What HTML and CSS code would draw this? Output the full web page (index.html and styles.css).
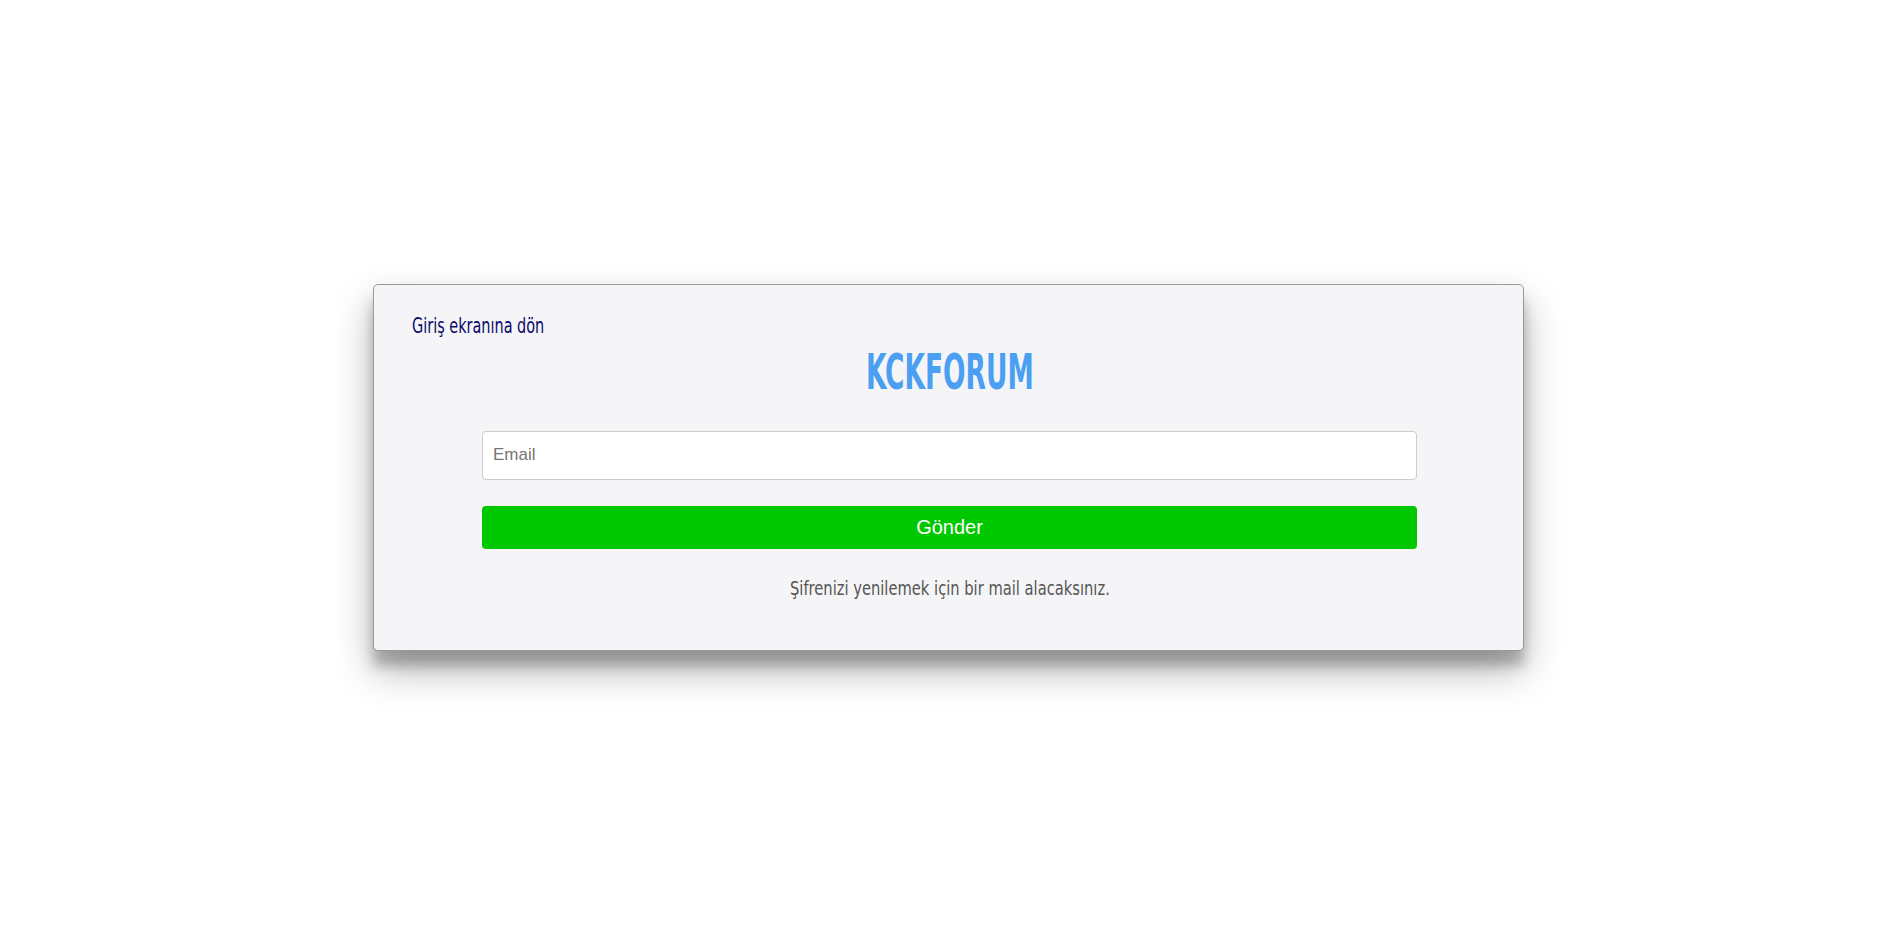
FILE: index.html
```html
<!DOCTYPE html>
<html lang="tr">
<head>
<meta charset="utf-8">
<title>KCKFORUM - Şifremi unuttum</title>
<link rel="stylesheet" href="styles.css">
</head>
<body>
<div class="page">
  <div class="card">
    <div class="back-row"><a class="back" href="#">Giriş ekranına dön</a></div>
    <h1 class="logo"><span class="logo-text">KCKFORUM</span></h1>
    <form class="form">
      <input class="email" type="email" placeholder="Email">
      <button class="submit" type="button">Gönder</button>
    </form>
    <p class="note"><span class="note-text">Şifrenizi yenilemek için bir mail alacaksınız.</span></p>
  </div>
</div>
</body>
</html>
```

FILE: styles.css
```css
html, body {
  margin: 0;
  padding: 0;
  background: #ffffff;
}

.page {
  min-height: 936px;
  display: flex;
  align-items: center;
  justify-content: center;
  padding-right: 5px;
  padding-bottom: 2px;
  box-sizing: border-box;
}

.card {
  width: 1151px;
  height: 367px;
  box-sizing: border-box;
  background: #f5f5f7;
  border: 1px solid #999;
  border-radius: 5px;
  box-shadow: 0 19px 38px rgba(0, 0, 0, 0.30), 0 15px 12px rgba(0, 0, 0, 0.22);
  padding: 27px 106px 0 108px;
  display: flex;
  flex-direction: column;
  font-family: "DejaVu Sans Condensed", "DejaVu Sans", sans-serif;
  font-stretch: condensed;
}

.back-row {
  height: 28px;
  margin-left: -70px;
}

.back {
  display: inline-block;
  color: #0a0a6b;
  text-decoration: none;
  font-size: 22px;
  line-height: 28px;
  white-space: nowrap;
  transform: scaleX(0.73);
  transform-origin: left center;
}

.logo {
  margin: 5px 0 0;
  text-align: center;
  color: #4a9ff2;
  font-size: 49px;
  font-weight: bold;
  line-height: 56px;
}

.logo-text {
  display: inline-block;
  transform: scaleX(0.6);
  transform-origin: center center;
}

.form {
  margin-top: 30px;
  display: flex;
  flex-direction: column;
}

.email {
  height: 49px;
  box-sizing: border-box;
  border: 1px solid #cccccc;
  border-radius: 4px;
  background: #fff;
  padding: 0 10px;
  font-family: "Liberation Sans", Arial, sans-serif;
  font-size: 17px;
  color: #333;
  outline: none;
}

.email::placeholder {
  color: #757575;
}

.submit {
  margin-top: 26px;
  height: 43px;
  border: none;
  border-radius: 4px;
  background: #00c800;
  color: #fff;
  font-family: "Liberation Sans", Arial, sans-serif;
  font-size: 20px;
  cursor: pointer;
}

.note {
  margin: 25px 0 0;
  text-align: center;
  color: #555555;
  font-size: 19px;
  line-height: 28px;
}

.note-text {
  display: inline-block;
  transform: scaleX(0.86);
  transform-origin: center center;
}
```
